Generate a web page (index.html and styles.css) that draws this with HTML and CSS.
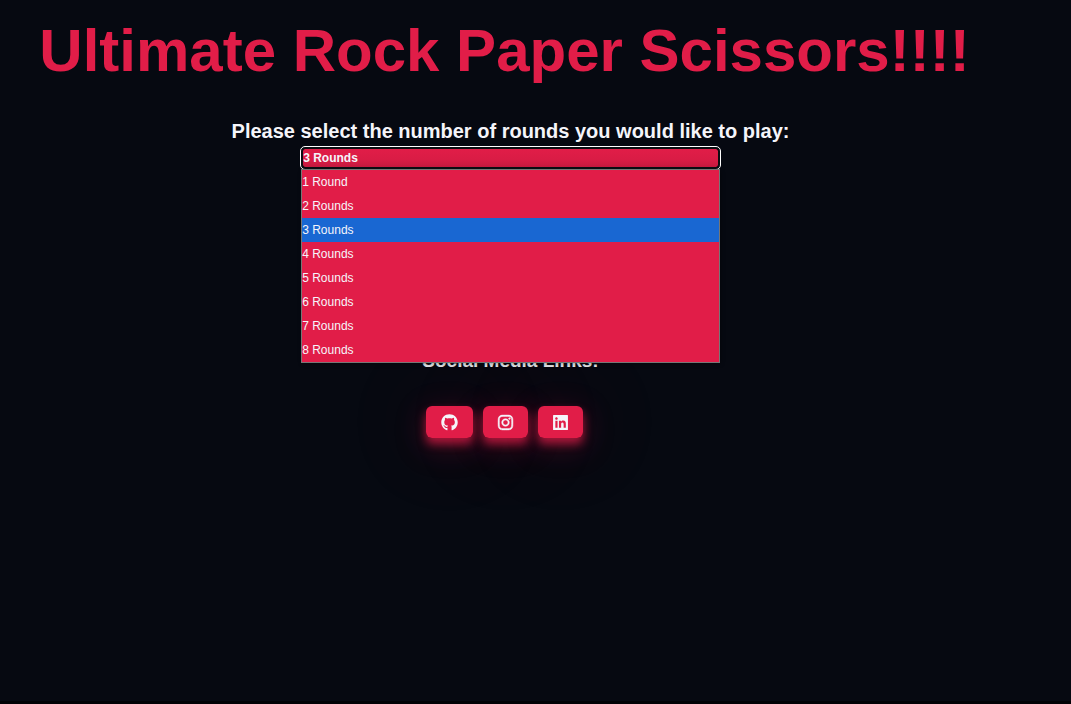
FILE: index.html
```html
<!DOCTYPE html>
<html lang="en">
<head>
<meta charset="utf-8">
<title>Ultimate Rock Paper Scissors</title>
<link rel="stylesheet" href="styles.css">
</head>
<body>
<main class="game">
  <h1 class="title">Ultimate Rock Paper Scissors!!!!</h1>
  <form class="rounds">
    <label class="rounds-label" for="rounds">Please select the number of rounds you would like to play:</label>
    <div class="picker">
      <select class="picker-select" id="rounds">
        <option>1 Round</option>
        <option>2 Rounds</option>
        <option selected>3 Rounds</option>
        <option>4 Rounds</option>
        <option>5 Rounds</option>
        <option>6 Rounds</option>
        <option>7 Rounds</option>
        <option>8 Rounds</option>
      </select>
      <ul class="picker-list" role="listbox" aria-label="Rounds">
        <li class="picker-option" role="option">1 Round</li>
        <li class="picker-option" role="option">2 Rounds</li>
        <li class="picker-option picker-option-active" role="option" aria-selected="true">3 Rounds</li>
        <li class="picker-option" role="option">4 Rounds</li>
        <li class="picker-option" role="option">5 Rounds</li>
        <li class="picker-option" role="option">6 Rounds</li>
        <li class="picker-option" role="option">7 Rounds</li>
        <li class="picker-option" role="option">8 Rounds</li>
      </ul>
    </div>
  </form>
  <section class="social">
    <h2 class="social-title">Social Media Links:</h2>
    <nav class="social-links">
      <a class="social-link" href="#" aria-label="GitHub">
        <svg class="icon icon-wide" viewBox="0 0 496 512" aria-hidden="true"><path d="M244.800 8C106.100 8 0 113.300 0 252c0 110.900 69.800 205.800 169.500 239.200 12.800 2.300 17.300-5.600 17.300-12.100 0-6.200-.3-40.400-.3-61.400 0 0-70 15-84.700-29.800 0 0-11.400-29.100-27.800-36.600 0 0-22.900-15.700 1.600-15.400 0 0 24.900 2 38.600 25.800 21.900 38.600 58.600 27.500 72.900 20.900 2.300-16 8.800-27.100 16-33.700-55.900-6.200-112.300-14.300-112.300-110.500 0-27.500 7.600-41.300 23.600-58.900-2.600-6.500-11.100-33.300 2.600-67.900 20.900-6.500 69 27 69 27 20-5.600 41.500-8.500 62.800-8.500s42.800 2.900 62.800 8.500c0 0 48.100-33.600 69-27 13.700 34.700 5.200 61.400 2.600 67.900 16 17.700 25.800 31.500 25.800 58.900 0 96.500-58.900 104.200-114.800 110.500 9.200 7.900 17 22.900 17 46.400 0 33.700-.3 75.400-.3 83.600 0 6.500 4.600 14.400 17.300 12.100C428.200 457.800 496 362.900 496 252 496 113.300 383.500 8 244.800 8z"/></svg>
      </a>
      <a class="social-link" href="#" aria-label="Instagram">
        <svg class="icon icon-heavy" viewBox="0 0 448 512" aria-hidden="true"><path d="M224.100 141c-63.600 0-114.900 51.300-114.900 114.900s51.300 114.900 114.900 114.900S339 319.500 339 255.900 287.700 141 224.100 141zm0 189.600c-41.100 0-74.700-33.500-74.700-74.700s33.500-74.700 74.700-74.700 74.700 33.500 74.700 74.700-33.600 74.700-74.700 74.700zm146.400-194.300c0 14.900-12 26.800-26.800 26.800-14.900 0-26.800-12-26.800-26.800s12-26.800 26.800-26.800 26.800 12 26.800 26.800zm76.100 27.200c-1.700-35.900-9.900-67.700-36.200-93.900-26.200-26.200-58-34.400-93.900-36.200-37-2.100-147.900-2.100-184.900 0-35.800 1.700-67.600 9.900-93.900 36.100s-34.400 58-36.200 93.900c-2.100 37-2.100 147.900 0 184.900 1.700 35.900 9.900 67.700 36.200 93.900s58 34.400 93.900 36.200c37 2.100 147.900 2.100 184.900 0 35.900-1.700 67.700-9.900 93.900-36.200 26.200-26.200 34.400-58 36.200-93.900 2.100-37 2.100-147.800 0-184.800zM398.800 388c-7.800 19.600-22.900 34.700-42.600 42.600-29.500 11.700-99.500 9-132.100 9s-102.700 2.600-132.100-9c-19.600-7.800-34.700-22.900-42.600-42.600-11.700-29.500-9-99.500-9-132.100s-2.600-102.700 9-132.100c7.800-19.600 22.900-34.700 42.600-42.600 29.500-11.700 99.500-9 132.100-9s102.700-2.600 132.100 9c19.600 7.800 34.700 22.900 42.600 42.600 11.700 29.500 9 99.500 9 132.100s2.700 102.700-9 132.100z"/></svg>
      </a>
      <a class="social-link" href="#" aria-label="LinkedIn">
        <svg class="icon" viewBox="0 0 448 512" aria-hidden="true"><path d="M432 32H16C6 32 0 40 0 48v416c0 10 6 16 16 16h416c10 0 16-6 16-16V48c0-8-6-16-16-16zM135.400 416H69V202.200h66.500V416zm-33.200-243c-21.300 0-38.500-17.300-38.500-38.500S80.900 96 102.200 96c21.200 0 38.500 17.300 38.500 38.500 0 21.300-17.200 38.500-38.500 38.500zm282.100 243h-66.400V312c0-24.800-.5-56.700-34.500-56.700-34.600 0-39.900 27-39.900 54.900V416h-66.400V202.200h63.700v29.200h.9c8.900-16.800 30.600-34.500 62.900-34.500 67.200 0 79.700 44.300 79.700 101.900V416z"/></svg>
      </a>
    </nav>
  </section>
</main>
</body>
</html>
```
FILE: styles.css
```css
* {
  box-sizing: border-box;
}

body {
  margin: 0;
  min-height: 100vh;
  background: #060911;
  border-bottom: 3px solid #010205;
  color: #f5f5fa;
  font-family: "Liberation Sans", Arial, sans-serif;
}

.game {
  display: flex;
  flex-direction: column;
  align-items: center;
  padding: 16px 50px 0 0;
}

.title {
  margin: 0;
  padding-right: 12px;
  color: #e11d48;
  font-size: 60px;
  line-height: 70px;
  white-space: nowrap;
}

.rounds {
  display: flex;
  flex-direction: column;
  align-items: center;
  width: 100%;
  margin-top: 33px;
}

.rounds-label {
  font-size: 20px;
  font-weight: bold;
  line-height: 24px;
}

.picker {
  position: relative;
  z-index: 1;
  width: 41%;
  margin-top: 4px;
}

.picker-select {
  display: block;
  width: 100%;
  height: 22px;
  padding: 0;
  appearance: none;
  border: 2px solid #0b0d12;
  border-radius: 4px;
  outline: 1px solid #ffffff;
  background: linear-gradient(#e11d48, #d91c45 60%, #c51a3f) padding-box;
  color: #f5f5fa;
  font-family: inherit;
  font-size: 12px;
  font-weight: bold;
}

.picker-list {
  position: absolute;
  top: 22px;
  left: 0;
  right: 0;
  margin: 0;
  padding: 0;
  border: 1px solid #767676;
  background: #e11d48;
  box-shadow: 1px 1px 4px rgba(0, 0, 0, 0.3);
  list-style: none;
}

.picker-option {
  font-size: 12px;
  line-height: 24px;
}

.picker-option-active {
  background: #1967d2;
}

.social {
  display: flex;
  flex-direction: column;
  align-items: center;
  margin-top: 181px;
}

.social-title {
  margin: 0;
  color: #e4e4e8;
  font-size: 19px;
  line-height: 22px;
}

.social-links {
  display: flex;
  gap: 10px;
  margin-top: 34px;
  padding-right: 12px;
}

.social-link {
  position: relative;
  display: flex;
  align-items: center;
  height: 32px;
  padding: 0 15px;
  border-radius: 6px;
  background: #e11d48;
  color: #f5f5fa;
}

.social-link::before {
  position: absolute;
  z-index: -1;
  inset: 0;
  border-radius: 6px;
  box-shadow: 0 6px 10px rgba(225, 29, 72, 0.7), 0 8px 32px rgba(225, 29, 72, 0.25), 0 0 90px 20px rgba(225, 29, 72, 0.05);
  content: "";
}

.icon {
  width: 15px;
  height: 17px;
  fill: currentColor;
}

.icon-wide {
  width: 17px;
}

.icon-heavy {
  overflow: visible;
  stroke: currentColor;
  stroke-width: 14;
}
```
